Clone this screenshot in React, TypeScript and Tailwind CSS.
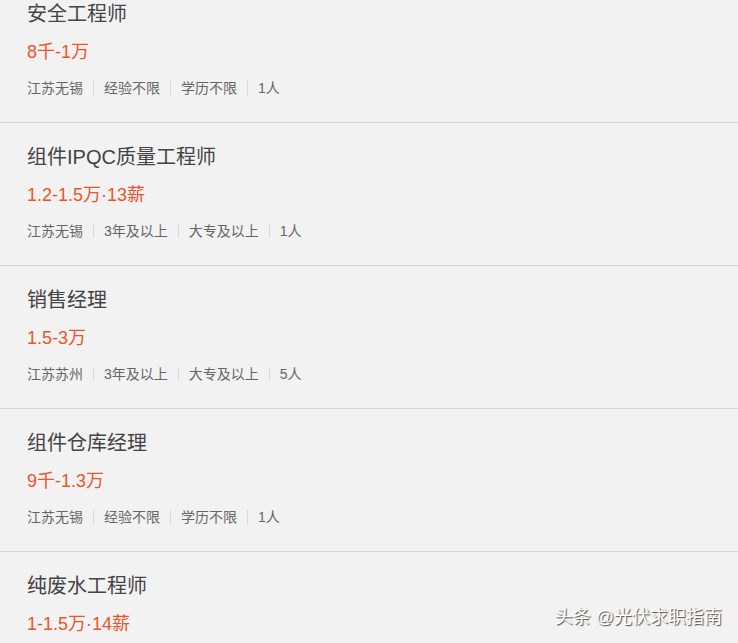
const jobs = [
  { title: '安全工程师', salary: '8千-1万', tags: ['江苏无锡', '经验不限', '学历不限', '1人'] },
  { title: '组件IPQC质量工程师', salary: '1.2-1.5万·13薪', tags: ['江苏无锡', '3年及以上', '大专及以上', '1人'] },
  { title: '销售经理', salary: '1.5-3万', tags: ['江苏苏州', '3年及以上', '大专及以上', '5人'] },
  { title: '组件仓库经理', salary: '9千-1.3万', tags: ['江苏无锡', '经验不限', '学历不限', '1人'] },
  { title: '纯废水工程师', salary: '1-1.5万·14薪', tags: ['江苏无锡', '3年及以上', '大专及以上', '1人'] },
];

function JobItem({ title, salary, tags }: { title: string; salary: string; tags: string[] }) {
  return (
    <div className="border-b border-[#d6d6d6] pl-[27px] pt-[20px] pb-[24px]">
      <h3 className="text-[20px] leading-[28px] text-[#444] font-normal">{title}</h3>
      <p className="mt-[11px] text-[18px] leading-[26px] text-[#f0522a]">{salary}</p>
      <div className="mt-[13px] flex items-center h-[20px] text-[14px] leading-[20px] text-[#666]">
        {tags.map((t, i) => (
          <div key={i} className="flex items-center">
            <span>{t}</span>
            {i < tags.length - 1 && <span className="mx-[10px] w-px h-[14px] bg-[#d9d9d9]" />}
          </div>
        ))}
      </div>
    </div>
  );
}

export default function App() {
  return (
    <div
      className="relative w-[738px] h-[643px] overflow-hidden bg-[#f2f2f2]"
      style={{ fontFamily: '"Liberation Sans", "Noto Sans CJK SC", sans-serif' }}
    >
      <div className="-mt-[20px]">
        {jobs.map((j, i) => (
          <JobItem key={i} {...j} />
        ))}
      </div>
      <div className="absolute right-[16px] top-[605px] text-[18px] leading-[24px] text-white [text-shadow:1px_1px_1px_rgba(0,0,0,0.7)]">
        头条 @光伏求职指南
      </div>
    </div>
  );
}
